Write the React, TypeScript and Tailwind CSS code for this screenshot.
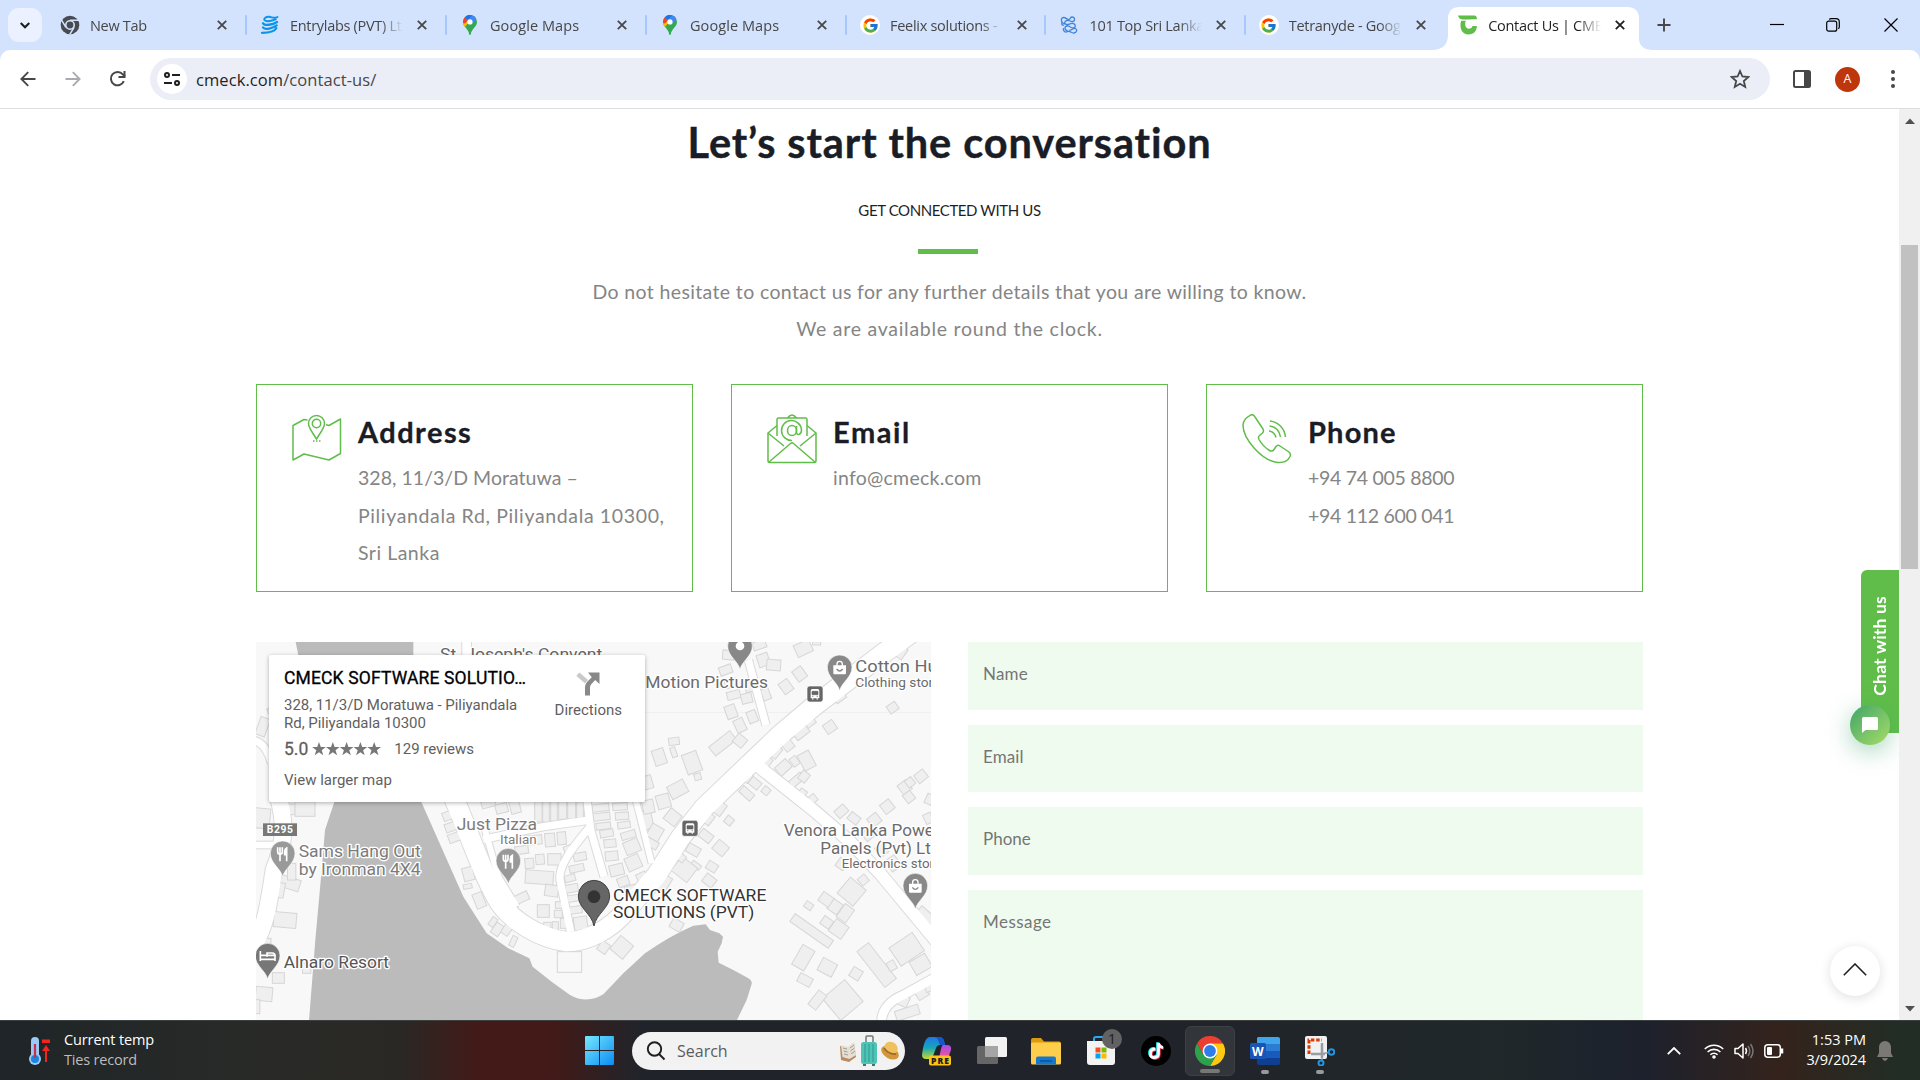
import React from "react";
import { FcGoogle } from "react-icons/fc";

type IconProps = { className?: string };

/* ---------- browser icons ---------- */

const X = ({ className = "" }: IconProps) => (
  <svg viewBox="0 0 10 10" className={className} fill="none" stroke="currentColor" strokeWidth="1.8">
    <path d="M.8.8l8.4 8.4M9.2.8L.8 9.2" />
  </svg>
);

const ChromeMono = () => (
  <svg viewBox="0 0 20 20" className="size-5">
    <circle cx="10" cy="10" r="9.3" fill="#474b50" />
    <circle cx="10" cy="10" r="4.2" fill="#474b50" stroke="#d3e3fd" strokeWidth="1.6" />
    <path d="M10 5.2h8.6M5.9 12.4L1.6 5.2M14.1 12.4L9.8 19.4" stroke="#d3e3fd" strokeWidth="1.5" />
  </svg>
);

const Entrylabs = () => (
  <svg viewBox="0 0 20 20" className="size-5" fill="none" stroke="#0b95ea" strokeWidth="2.3" strokeLinecap="round">
    <path d="M17.500 2C14 4 12 2 9 1.800 6 1.600 3.500 3.500 4.500 5.200 6 7 13 6 15.800 4.200" strokeWidth="2" />
    <path d="M3 8.200c1.500 3 10 1.500 14-1.200M3 12.400c2 2.800 10 1 13.700-2M2 17.800c5 0 12-.5 14.300-4.500" />
  </svg>
);

const MapsPin = () => (
  <svg viewBox="0 0 14 20" className="h-5 w-3.5">
    <path d="M7 0a7 7 0 0 1 7 7c0 5-5.500 6.500-6.200 12.300-.1.900-1.500.9-1.600 0C5.500 13.500 0 12 0 7a7 7 0 0 1 7-7z" fill="#34a853" />
    <path d="M0 7c0 2 .8 3.600 1.900 5l5.900-7L1.700 2.400A7 7 0 0 0 0 7z" fill="#fbbc04" />
    <path d="M1.700 2.400L5 5.200 2 8.600.1 8A7 7 0 0 1 1.700 2.400z" fill="#ea4335" />
    <path d="M1.700 2.400A7 7 0 0 1 9.100.3L5 5.200z" fill="#1a73e8" />
    <path d="M9.100.3a7 7 0 0 1 4.200 3.600L9 9 5 5.200z" fill="#4285f4" />
    <circle cx="7" cy="6.900" r="2.600" fill="#fff" />
  </svg>
);

const GoogleFav = () => (
  <span className="flex size-5 items-center justify-center rounded-full bg-white">
    <FcGoogle className="size-[17px]" />
  </span>
);

const Knot = () => (
  <svg viewBox="0 0 18 18" className="size-[18px]" fill="none" stroke="#3f83dc" strokeWidth="1.300">
    <path d="M5 8C1 7 0 2 3.500 1.500 6 1.300 7 4 9 3.500c2-.6 1-2.500 3-2.500 3 0 3.500 4 .5 4.500-2 .3-3-1.500-5.500-1C4 5 4 8 6.500 8.500c2 .3 4-1.500 6.500-1 3 .6 3 4 .5 4.500-2.500.3-4-2.500-6.500-2-3 .6-2.500 4.500.5 4.500" />
    <path d="M2 6.500c-1 2 .5 3 2 2.500M3.500 12c-1 3 2 5 4 3.500 2-1.300 4 2 6.500 1.500 3-.6 3.500-3.500 1.500-4.500-2-.8-4 2-6 1.500" />
  </svg>
);

const CmeckFav = () => (
  <svg viewBox="0 0 19 19" className="size-5">
    <path d="M0 .500h15.500q2.500 0 2.500 3.500h-4.500c-1 0-.8.300-5.500.300C4 4.300 1 4.500 0 .500z" fill="#61bd4a" />
    <path d="M3 5.500h4.500c-1.300 2.500-1 7.500 3 7.500 2.500 0 3-1.500 3.200-2.500H18c-.3 5-3 8-8 8-6.500 0-9-6.500-7-13z" fill="#61bd4a" />
  </svg>
);

const tabs: { title: string; icon: React.ReactNode; spacing: string; width: string }[] = [
  { title: "New Tab", icon: <ChromeMono />, spacing: "tracking-[-0.300px]", width: "w-[200px]" },
  { title: "Entrylabs (PVT) Lt", icon: <Entrylabs />, spacing: "tracking-[-0.300px]", width: "w-[200px]" },
  { title: "Google Maps", icon: <MapsPin />, spacing: "tracking-[0.080px]", width: "w-[200px]" },
  { title: "Google Maps", icon: <MapsPin />, spacing: "tracking-[0.080px]", width: "w-[200px]" },
  { title: "Feelix solutions -", icon: <GoogleFav />, spacing: "tracking-[-0.280px]", width: "w-[199.400px]" },
  { title: "101 Top Sri Lanka", icon: <Knot />, spacing: "tracking-[-0.280px]", width: "w-[199.400px]" },
  { title: "Tetranyde - Goog", icon: <GoogleFav />, spacing: "tracking-[-0.300px]", width: "w-[199.400px]" },
  { title: "Contact Us | CME", icon: <CmeckFav />, spacing: "tracking-[-0.300px]", width: "w-[199.400px]" },
];

function Tab({ title, icon, spacing, width, active, divider }: (typeof tabs)[number] & { active: boolean; divider: boolean }) {
  return (
    <div className={`relative flex h-[50px] shrink-0 items-center pl-3 ${width} ${active ? "text-[#1f1f1f]" : "text-[#474747]"}`}>
      {active && (
        <svg viewBox="0 0 220 43" className="absolute bottom-0 -left-3 h-[43px] w-[220px]" fill="#fff">
          <path d="M0 43q15-1 15-15V12Q15 0 27 0h167q12 0 12 12v19q0 12 14 12z" />
        </svg>
      )}
      <div className="relative flex h-full w-full items-center">
        <span className="flex w-[22px] justify-center">{icon}</span>
        <span className={`mt-px ml-[9px] w-[113px] overflow-hidden text-[14.500px] whitespace-nowrap [mask-image:linear-gradient(to_right,#000_80%,transparent_100%)] ${spacing}`}>
          {title}
        </span>
        <X className="ml-3.5 size-2.5" />
      </div>
      {divider && <span className="absolute right-0 h-5 w-0.5 rounded bg-[#a8c7fa]" />}
    </div>
  );
}

function TabStrip() {
  return (
    <header className="flex h-[50px] items-center bg-[#d3e3fd]">
      <button className="mr-[5px] ml-2 flex h-[34px] w-[34px] shrink-0 items-center justify-center rounded-[11px] bg-[#ebf1fe]">
        <svg viewBox="0 0 10 7" className="h-[7px] w-2.5" fill="none" stroke="#1f1f1f" strokeWidth="2.100">
          <path d="M.7 1L5 5.300 9.300 1" />
        </svg>
      </button>
      {tabs.map((t, i) => (
        <Tab key={i} {...t} active={i === 7} divider={i < 6} />
      ))}
      <svg viewBox="0 0 14 14" className="ml-3 size-3.5 shrink-0" stroke="#474747" strokeWidth="1.900">
        <path d="M7 .5v13M.5 7h13" />
      </svg>
      <div className="ml-auto flex items-center pr-[22px] text-black">
        <svg viewBox="0 0 14 14" className="size-3.5" stroke="currentColor" strokeWidth="1.200"><path d="M0 6.500h14" /></svg>
        <svg viewBox="0 0 14 14" className="ml-[42px] size-3.5" fill="none" stroke="currentColor" strokeWidth="1.200">
          <rect x=".7" y="3.200" width="10" height="10" rx="2" />
          <path d="M3.300 1.500Q4 .7 5.300.7H10q3.300 0 3.300 3.300v5q0 1-1 1.800" />
        </svg>
        <svg viewBox="0 0 14 14" className="ml-11 size-3.5" stroke="currentColor" strokeWidth="1.200"><path d="M.5.5l13 13M13.500.5l-13 13" /></svg>
      </div>
    </header>
  );
}

function Toolbar() {
  return (
    <div className="bg-[#d3e3fd]">
      <div className="flex h-[59px] items-center rounded-t-[10px] border-b border-[#dcdee2] bg-white pl-5 text-[#474747]">
        <svg viewBox="0 0 16 16" className="size-4" fill="none" stroke="currentColor" strokeWidth="1.900"><path d="M15.500 8H1.800M8.200 1.200L1.400 8l6.800 6.800" /></svg>
        <svg viewBox="0 0 16 16" className="ml-[29px] size-4" fill="none" stroke="#a9abae" strokeWidth="1.900"><path d="M.5 8h13.700M7.800 1.200L14.600 8l-6.800 6.800" /></svg>
        <svg viewBox="0 0 18 18" className="ml-7 size-[18px]" fill="none" stroke="currentColor" strokeWidth="2">
          <path d="M14.800 11.200A6.700 6.700 0 1 1 13.800 4.400L16 6.500" />
          <path d="M15.500 1v6h-6" />
        </svg>
        <div className="ml-[23px] flex h-[42px] w-[1620px] items-center rounded-full bg-[#ebeef7] pr-5 pl-[7px]">
          <span className="flex size-[30px] items-center justify-center rounded-full bg-white">
            <svg viewBox="0 0 16 14" className="h-3.5 w-4" fill="none" stroke="#1f1f1f" strokeWidth="2">
              <circle cx="3" cy="3" r="2" /><path d="M8 3h8M0 11h8" /><circle cx="13" cy="11" r="2" />
            </svg>
          </span>
          <span className="mt-0.5 ml-[9px] text-[16.500px] tracking-[0.080px] text-[#1f1f1f]">
            cmeck.com<span className="text-[#474747]">/contact-us/</span>
          </span>
          <svg viewBox="0 0 20 20" className="ml-auto size-5" fill="none" stroke="currentColor" strokeWidth="1.800">
            <path d="M10 2l2.400 5.500 6 .5-4.600 4 1.400 5.900-5.200-3.200-5.200 3.200L6.200 12 1.600 8l6-.5z" />
          </svg>
        </div>
        <svg viewBox="0 0 18 18" className="ml-[23px] size-[18px]"><rect x="1" y="1" width="16" height="16" rx="1.500" fill="none" stroke="#474747" strokeWidth="2" /><path d="M11 1h6v16h-6z" fill="#474747" /></svg>
        <span className="ml-6 flex size-[25px] items-center justify-center rounded-full bg-[#bf360c] text-[12.500px] text-white">A</span>
        <svg viewBox="0 0 4 18" className="ml-[31px] h-[18px] w-1" fill="currentColor"><circle cx="2" cy="2" r="2" /><circle cx="2" cy="9" r="2" /><circle cx="2" cy="16" r="2" /></svg>
      </div>
    </div>
  );
}

/* ---------- contact cards ---------- */

const MapIcon = () => (
  <svg viewBox="0 0 50 50" className="size-[50px]" fill="none" stroke="#61bd4a" strokeWidth="1.500">
    <path d="M15.500 6L12 5.500 1 11.500v34.500l11-6 25 6 11.500-6.500V5L37 11.500l-3-.8" strokeLinejoin="round" />
    <path d="M24.500 25C20 17.500 16.500 14 16.500 9.500a8 8 0 0 1 16 0c0 4.500-3.500 8-8 15.500z" />
    <circle cx="24.500" cy="9.500" r="4.200" />
    <path d="M21 27h7.500" strokeDasharray="1.500 1.500" />
  </svg>
);

const MailIcon = () => (
  <svg viewBox="0 0 50 50" className="size-[50px]" fill="none" stroke="#61bd4a" strokeWidth="1.500" strokeLinejoin="round">
    <path d="M10 11.500L1 19v28q0 1.500 1.500 1.500h45q1.500 0 1.500-1.500V19l-9-7.500" />
    <path d="M10 22V5.500Q10 4 11.500 4h27Q40 4 40 5.500V22M20.500 4q4.500-6 9 0" />
    <path d="M1 19l16 13M49 19L33 32M2 48l21.500-18.500q1.500-1.500 3 0L48 48" />
    <path d="M25 26.500a10 10 0 1 1 9.500-10.500c0 5-5 6-5 2v-6" />
    <ellipse cx="25" cy="16.500" rx="4.500" ry="5" />
  </svg>
);

const PhoneIcon = () => (
  <svg viewBox="0 0 50 50" className="size-[50px]" fill="none" stroke="#61bd4a" strokeWidth="1.500" strokeLinejoin="round">
    <path d="M9 .8C4 3.500 1 7 1 11c0 14 19 36 35 37.500 6 .5 10-2 12-6 .8-1.800.5-3.300-1-4.500l-9-6c-1.500-1-3-.8-4 .5l-2 3c-1 1.500-2.500 2-4.500 1-4-2.500-8-6.500-10.500-11-1-2-.5-3.500 1-4.500l2.500-2c1-1 1.500-2 .5-4L13 3Q11.500 0 9 .8z" />
    <path d="M28 7c8 1 14.500 7 15.500 16M27.500 12c6 .8 10 5 11 11M27 17c4 .5 6 2.500 7 6.500" />
  </svg>
);

type Line = { text: string; spacing: string };
const cards: { title: string; icon: React.ReactNode; head: string; lines: Line[] }[] = [
  {
    title: "Address",
    icon: <MapIcon />,
    head: "tracking-[1.450px]",
    lines: [
      { text: "328, 11/3/D Moratuwa –", spacing: "tracking-[0.030px]" },
      { text: "Piliyandala Rd, Piliyandala 10300,", spacing: "tracking-[0.640px]" },
      { text: "Sri Lanka", spacing: "tracking-[0.500px]" },
    ],
  },
  { title: "Email", icon: <MailIcon />, head: "tracking-[1.550px]", lines: [{ text: "info@cmeck.com", spacing: "tracking-[0.250px]" }] },
  {
    title: "Phone",
    icon: <PhoneIcon />,
    head: "tracking-[1.200px]",
    lines: [
      { text: "+94 74 005 8800", spacing: "tracking-[-0.300px]" },
      { text: "+94 112 600 041", spacing: "tracking-[-0.300px]" },
    ],
  },
];

/* ---------- map drawing ---------- */

// [centre x, centre y, width, height, rotation]
type B = [number, number, number, number, number];
const buildings: B[] = [
  [38, 290, 30, 55, 20], [70, 245, 30, 30, -25], [35, 565, 50, 60, 5], [125, 538, 22, 32, 0], [165, 537, 60, 44, 0],
  [120, 760, 60, 35, 18], [88, 780, 30, 45, 10], [105, 870, 68, 45, 5], [45, 945, 36, 40, 0], [85, 1044, 36, 32, 0],
  [42, 1092, 50, 42, 5], [125, 725, 25, 50, 0], [170, 1015, 25, 30, 0], [22, 1130, 15, 42, 0],
  [600, 555, 44, 26, -20], [605, 590, 40, 26, -20], [615, 622, 40, 26, -20], [655, 732, 32, 40, -15], [653, 769, 26, 14, -10],
  [688, 811, 30, 46, -22], [729, 876, 18, 28, 35], [742, 898, 26, 36, 35], [770, 900, 24, 30, 35], [790, 934, 16, 32, 25],
  [715, 520, 42, 24, -15], [755, 535, 36, 28, -15], [795, 530, 30, 40, -15], [865, 545, 22, 62, 0], [888, 545, 20, 62, 0],
  [912, 543, 20, 60, 0], [938, 540, 24, 56, 0], [965, 540, 24, 54, 0], [990, 540, 20, 50, 0],
  [838, 700, 26, 30, -5], [870, 688, 26, 30, -5], [913, 688, 40, 34, 0], [868, 742, 84, 40, 4], [815, 803, 42, 26, -25],
  [790, 833, 22, 20, 30], [880, 843, 36, 38, 0], [905, 782, 40, 34, 8], [892, 888, 22, 22, 0], [916, 888, 18, 26, 0],
  [940, 880, 18, 30, 0], [925, 852, 24, 22, 0], [928, 825, 24, 20, 0], [960, 745, 32, 20, -15], [965, 775, 38, 24, -10],
  [970, 805, 36, 20, -8], [980, 715, 44, 22, -12], [990, 680, 38, 24, -10], [975, 840, 42, 22, -8], [992, 880, 40, 40, -8],
  [850, 630, 52, 28, -5], [900, 630, 30, 40, -5], [935, 625, 26, 38, -5], [815, 660, 40, 24, -8], [955, 660, 24, 26, -20],
  [1052, 533, 50, 22, -6], [1055, 560, 50, 22, -6], [1060, 588, 44, 20, -6], [1070, 610, 40, 22, -10], [1080, 640, 36, 24, -6],
  [1085, 678, 38, 28, -6], [1100, 720, 42, 34, -14], [1120, 755, 34, 28, -20], [1110, 530, 44, 22, -4], [1116, 558, 40, 22, -4],
  [1122, 585, 38, 20, -8], [1135, 615, 44, 22, -16], [1146, 650, 46, 40, -22], [1150, 698, 44, 42, -24], [1142, 780, 32, 26, -20],
  [1190, 570, 34, 56, -12], [1195, 530, 34, 40, -12], [1175, 740, 30, 24, -25],
  [1215, 608, 40, 44, 30], [1205, 640, 40, 24, 30], [1240, 514, 40, 42, -16], [1268, 562, 42, 40, 38], [1190, 458, 34, 40, -16],
  [1061, 952, 30, 32, 35], [1115, 952, 50, 52, 40], [1235, 755, 48, 48, 32], [1280, 885, 36, 30, 30],
  [1228, 381, 36, 48, -18], [1272, 334, 32, 22, -8], [1271, 367, 16, 30, -20], [1326, 398, 46, 62, -20], [1343, 440, 20, 20, -15],
  [1418, 340, 80, 34, -38], [1283, 478, 54, 42, -28], [1470, 332, 34, 32, 40], [1435, 75, 34, 28, 5], [1427, 120, 38, 26, -20],
  [1443, 160, 36, 24, -16], [1451, 195, 40, 24, -14], [1443, 245, 32, 40, -20], [1470, 286, 30, 40, -25], [1507, 260, 28, 36, -22],
  [1540, 90, 34, 38, -18], [1571, 105, 42, 32, 5], [1528, 45, 40, 25, -20], [1548, 193, 24, 34, -20], [1608, 170, 32, 38, -36],
  [1649, 132, 32, 38, -36], [1660, 55, 50, 38, -25], [1700, 40, 24, 10, 0], [1490, 205, 32, 30, -14], [1500, 170, 30, 30, -14],
  [1645, 296, 46, 56, -38], [1675, 270, 30, 40, -38], [1695, 240, 30, 28, 28], [1740, 291, 32, 34, 55], [1580, 318, 28, 22, 38],
  [1611, 342, 30, 40, -38], [1543, 393, 40, 36, 38], [1577, 366, 26, 36, 38], [1600, 412, 32, 44, 48], [1634, 394, 22, 28, -38],
  [1670, 392, 38, 52, -28], [1640, 450, 46, 24, -40], [1662, 440, 26, 30, 38], [1658, 488, 22, 20, 35], [1684, 510, 34, 24, -38],
  [1928, 233, 30, 26, -35], [1768, 200, 28, 34, 55], [1790, 165, 26, 30, -38], [1870, 85, 42, 20, -38], [1950, 65, 34, 36, 35], [1920, 45, 32, 26, 35],
  [1490, 440, 28, 30, 38], [1515, 460, 26, 34, -50], [1490, 490, 24, 44, -48], [1548, 482, 22, 22, 40], [1460, 466, 20, 22, 40],
  [1405, 533, 38, 40, 36], [1376, 567, 24, 34, 38], [1437, 572, 24, 24, 38], [1368, 618, 40, 28, 38], [1412, 654, 40, 36, 40],
  [1330, 660, 40, 28, 30], [1386, 710, 32, 26, 32], [1338, 706, 30, 16, 35], [1303, 718, 60, 54, 38], [1378, 752, 36, 30, 38], [1290, 680, 34, 22, 40],
  [1774, 544, 36, 28, -42], [1812, 565, 34, 26, 38], [1873, 570, 34, 32, -38], [1912, 530, 34, 34, -38], [1964, 472, 32, 34, -38],
  [1980, 457, 24, 26, -38], [2013, 439, 34, 30, -38], [1977, 501, 28, 30, -38], [2038, 508, 22, 30, 25], [2035, 565, 24, 30, -25],
  [1805, 785, 62, 62, -50], [1840, 750, 26, 26, -40], [1755, 830, 36, 36, 35], [1728, 808, 38, 32, 35], [1786, 850, 34, 48, 35],
  [1676, 827, 24, 20, 35], [1730, 877, 32, 28, 35], [1766, 897, 46, 44, 35], [1685, 903, 140, 28, 35], [1660, 983, 42, 68, 30],
  [1732, 1012, 48, 42, 28], [1665, 1050, 42, 28, 28], [1818, 1031, 32, 32, 32], [1880, 1005, 44, 136, -38], [1970, 958, 84, 66, -34],
  [2012, 1003, 54, 46, -30], [1925, 1007, 24, 28, -30], [2025, 862, 60, 40, 42], [1778, 1110, 88, 86, -40], [1702, 1110, 30, 54, 38],
  [1959, 1112, 34, 32, 25], [2015, 1088, 36, 34, -32], [1972, 1148, 72, 30, -18], [2040, 1068, 32, 30, -20], [1930, 700, 34, 40, -35], [1895, 660, 28, 34, -38], [1775, 702, 28, 30, 35], [1860, 610, 44, 30, -38],
];

const mainRoad = "M2010 -10L1900 70 1690 230 1590 315 1480 420 1360 535 1290 625 1220 735 1130 840C1080 900 1010 935 950 935C870 925 790 875 750 820C700 740 670 640 610 500L560 400";
const sideRoads: [string, number][] = [
  ["M1495 385L1690 540 1800 635 1890 730 2060 935", 36],
  ["M1495 90L1548 285", 22],
  ["M1155 500L1205 700", 18],
  ["M1010 500L1022 600 1062 740", 22],
  ["M1025 585C960 660 925 710 930 750L962 905", 22],
  ["M700 628L880 590 1020 570", 22],
  ["M705 600L745 740 800 830", 18],
  ["M85 500C110 590 100 650 72 720 55 830 50 880 5 960", 50],
  ["M0 645L80 645", 20],
  ["M2060 1040L1960 1095Q1890 1125 1895 1185", 26],
  ["M0 330Q45 330 65 400", 22],
  ["M650 20V100", 26],
];

const Pin = ({ x, y, fill, children }: { x: number; y: number; fill: string; children?: React.ReactNode }) => (
  <g transform={`translate(${x} ${y})`}>
    <path d="M0 70C-6 45-37 30-37 0a37 37 0 0 1 74 0C37 30 6 45 0 70z" fill={fill} stroke="#fff" strokeOpacity=".6" strokeWidth="3" />
    {children}
  </g>
);

const Fork = () => (
  <g fill="none" stroke="#fff" strokeWidth="5">
    <path d="M-15-18v14q0 6 7 6t7-6v-14M-8-18v42" />
    <path d="M12 24V-16q-6 3-6 12v8h6" fill="#fff" />
  </g>
);
const Bag = () => (
  <g>
    <path d="M-19-6h38v24q0 3-3 3h-32q-3 0-3-3z" fill="#fff" />
    <path d="M-8-4v-6a8 8 0 0 1 16 0v6" fill="none" stroke="#fff" strokeWidth="4" />
    <path d="M-9 5q9 12 18 0" fill="none" stroke="#888" strokeWidth="4" />
  </g>
);
const Bus = ({ x, y }: { x: number; y: number }) => (
  <g transform={`translate(${x} ${y})`}>
    <rect x="-24" y="-24" width="48" height="48" rx="8" fill="#666" stroke="#fff" strokeWidth="2" />
    <path d="M-13-10q0-5 5-5H8q5 0 5 5v23h-5v4H5v-4H-5v4h-3v-4h-5z" fill="#fff" />
    <path d="M-9-8H9V2H-9zM-9 7h4M5 7h4" fill="#666" stroke="#666" strokeWidth="2" />
  </g>
);

const labels: { x: number; y: number; w: number; s: number; c: string; t: string }[] = [
  { x: 570, y: 91, w: 487, s: 51, c: "#666", t: "St. Joseph's Convent" },
  { x: 1186, y: 175, w: 368, s: 51, c: "#6b6b6b", t: "Motion Pictures" },
  { x: 1816, y: 127, w: 320, s: 51, c: "#6b6b6b", t: "Cotton Hut.lk" },
  { x: 1816, y: 171, w: 255, s: 41, c: "#6b6b6b", t: "Clothing store" },
  { x: 620, y: 599, w: 241, s: 51, c: "#7b7b7b", t: "Just Pizza" },
  { x: 750, y: 641, w: 110, s: 41, c: "#7b7b7b", t: "Italian" },
  { x: 146, y: 681, w: 366, s: 51, c: "#7b7b7b", t: "Sams Hang Out" },
  { x: 146, y: 734, w: 366, s: 51, c: "#7b7b7b", t: "by Ironman 4X4" },
  { x: 101, y: 1014, w: 316, s: 51, c: "#555", t: "Alnaro Resort" },
  { x: 1089, y: 812, w: 460, s: 52, c: "#333", t: "CMECK SOFTWARE" },
  { x: 1089, y: 864, w: 424, s: 52, c: "#333", t: "SOLUTIONS (PVT)" },
  { x: 1601, y: 619, w: 468, s: 51, c: "#6b6b6b", t: "Venora Lanka Power" },
  { x: 1711, y: 671, w: 360, s: 51, c: "#6b6b6b", t: "Panels (Pvt) Ltd" },
  { x: 1775, y: 714, w: 298, s: 41, c: "#6b6b6b", t: "Electronics store" },
];

function MapCanvas() {
  return (
    <svg viewBox="18 36 2025 1134" className="block h-[378px] w-[675px] font-[Roboto]">
      <rect x="0" y="0" width="2100" height="1200" fill="#f8f8f8" />
      <path d="M1160 247H2050" stroke="#efefef" strokeWidth="3" />
      <path
        fill="#bbb"
        d="M137 36H490V300L514 516 640 800 710 910 775 955 838 985 848 1010 905 1055 960 1095Q1010 1123 1060 1093L1120 1030 1185 970Q1260 917 1330 887L1367 883 1380 900 1408 910 1419 920 1415 940 1403 965 1406 998 1450 1020 1495 1045Q1507 1052 1505 1062L1490 1110 1460 1172H177L196 930 215 720 225 600 253 516 170 200z"
      />
      <g fill="none" stroke="#dadada">
        <path d={mainRoad} strokeWidth="64" />
        {sideRoads.map(([d, w], i) => <path key={i} d={d} strokeWidth={w + 6} />)}
      </g>
      <g fill="#efefef" stroke="#d6d6d6" strokeWidth="3">
        {buildings.map(([cx, cy, w, h, r], i) => (
          <rect key={i} x={cx - w / 2} y={cy - h / 2} width={w} height={h} transform={`rotate(${r} ${cx} ${cy})`} />
        ))}
        <rect x="922" y="965" width="73" height="62" fill="#f8f8f8" />
      </g>
      <g fill="none" stroke="#fff">
        <path d={mainRoad} strokeWidth="58" />
        {sideRoads.map(([d, w], i) => <path key={i} d={d} strokeWidth={w} />)}
      </g>
      <rect x="39" y="580" width="102" height="38" fill="#777" />
      <text x="50" y="610" fontSize="31" fontWeight="700" fill="#fff" textLength="79">B295</text>
      <Pin x={98} y={670} fill="#999"><Fork /></Pin>
      <Pin x={775} y={692} fill="#999"><Fork /></Pin>
      <Pin x={53} y={977} fill="#777">
        <path d="M-22-14v30M-22 11h44v-12h-44M22 16v-16q0-8-8-8H-2V3M-12-4h.1" stroke="#fff" strokeWidth="5" fill="none" />
      </Pin>
      <Pin x={1470} y={48} fill="#888"><circle r="13" fill="#fff" /></Pin>
      <Pin x={1769} y={112} fill="#888"><Bag /></Pin>
      <Pin x={1996} y={767} fill="#888"><Bag /></Pin>
      <Bus x={1695} y={192} />
      <Bus x={1320} y={595} />
      <path d="M1032 888C1025 850 985 835 985 798a47 47 0 0 1 94 0C1079 835 1039 850 1032 888z" fill="#666" stroke="#444" strokeWidth="3" />
      <circle cx="1032" cy="800" r="19" fill="#333" />
      <g stroke="#fff" strokeWidth="8" strokeLinejoin="round" paintOrder="stroke">
        {labels.map((l) => (
          <text key={l.t} x={l.x} y={l.y} fontSize={l.s} fill={l.c} textLength={l.w} lengthAdjust="spacingAndGlyphs">{l.t}</text>
        ))}
      </g>
    </svg>
  );
}

function MapEmbed() {
  return (
    <div className="relative h-[378px] w-[675px] overflow-hidden">
      <MapCanvas />
      <div className="absolute top-[13px] left-[13px] flex h-[147px] w-[376px] justify-between rounded-[2px] bg-white pt-3 pr-[23px] pl-[15px] font-[Roboto] text-[#5f5f5f] shadow-[0_1px_4px_rgba(0,0,0,0.3)]">
        <div>
          <div className="text-[17.500px] leading-[23px] tracking-[0.150px] text-black [-webkit-text-stroke:0.3px]">CMECK SOFTWARE SOLUTIO…</div>
          <div className="mt-1.5 text-[15px] leading-[18px] tracking-[-0.030px]">328, 11/3/D Moratuwa - Piliyandala<br />Rd, Piliyandala 10300</div>
          <div className="mt-2 flex h-[18px] items-center text-[15px]">
            <span className="text-[17.500px] [-webkit-text-stroke:0.3px]">5.0</span>
            <svg viewBox="0 0 70 14" className="ml-1 h-3.5 w-[70px]" fill="#777">
              {[0, 1, 2, 3, 4].map((n) => (
                <path key={n} transform={`translate(${n * 13.8} 0)`} d="M7 0l1.800 5h5L9.700 8.200 11.300 13.300 7 10.200 2.700 13.300 4.300 8.200.2 5h5z" />
              ))}
            </svg>
            <span className="mt-px ml-3">129 reviews</span>
          </div>
          <div className="mt-[13px] text-[15px] leading-[18px]">View larger map</div>
        </div>
        <div className="flex flex-col items-center pt-[5px] text-[15px]">
          <svg viewBox="0 0 24 24" className="size-6">
            <path d="M3.500.5L.3 3.700 9 11.500l3-3.500z" fill="#c9c9c9" />
            <path d="M9 23.500V15q0-3 2.500-5.500l4.300-4.200L12 .5h11.500V12l-4.300-4-4 4.300q-1.200 1.200-1.200 3.200v8z" fill="#888" />
          </svg>
          <span className="mt-[3px]">Directions</span>
        </div>
      </div>
    </div>
  );
}

/* ---------- page ---------- */

const Field = ({ label, height, spacing = "" }: { label: string; height: string; spacing?: string }) => (
  <div className={`bg-[#f0fbef] px-[15px] pt-[19px] font-[Lato] text-[17px] leading-[26px] text-[#757575] ${height} ${spacing}`}>{label}</div>
);

function Page() {
  return (
    <main className="relative h-[911px] flex-1 overflow-hidden bg-white font-[Lato]">
      <div className="mx-auto w-[1387px]">
        <section className="flex h-[275px] flex-col items-center text-center">
          <h1 className="mt-[9px] text-[41.500px] leading-[48px] font-bold tracking-[0.900px] text-[#1a1c26] [-webkit-text-stroke:0.4px]">Let’s start the conversation</h1>
          <p className="mt-[34px] text-[15px] leading-5 tracking-[-0.400px] text-[#1f1f1f]">GET CONNECTED WITH US</p>
          <span className="mt-[29px] ml-[-3px] h-[5px] w-[60px] bg-[#61bd4a]" />
          <p className="mt-[19px] text-[19.500px] leading-[37px] tracking-[0.360px] text-[#858585]">
            Do not hesitate to contact us for any further details that you are willing to know.
            <br />
            <span className="tracking-[0.740px]">We are available round the clock.</span>
          </p>
        </section>
        <section className="grid grid-cols-3 gap-[38px]">
          {cards.map((c) => (
            <article key={c.title} className="flex h-[208px] border border-[#61bd4a] pt-7 pl-[35px]">
              <div className="w-[66px] shrink-0 pt-px">{c.icon}</div>
              <div>
                <h2 className={`text-[29px] leading-[38px] font-bold text-[#1a1c26] [-webkit-text-stroke:0.3px] ${c.head}`}>{c.title}</h2>
                <div className="mt-2 text-[19.500px] leading-[37.500px] whitespace-nowrap text-[#858585]">
                  {c.lines.map((l) => <div key={l.text} className={l.spacing}>{l.text}</div>)}
                </div>
              </div>
            </article>
          ))}
        </section>
        <section className="mt-[50px] grid grid-cols-[675px_675px] gap-[37px]">
          <MapEmbed />
          <form className="flex flex-col gap-[15px]">
            <Field label="Name" height="h-[67.500px]" spacing="tracking-[0.200px]" />
            <Field label="Email" height="h-[67.500px]" spacing="tracking-[0.100px]" />
            <Field label="Phone" height="h-[67.500px]" />
            <Field label="Message" height="h-[135px]" spacing="tracking-[0.450px]" />
          </form>
        </section>
      </div>

      <div className="absolute top-[461px] right-0 flex h-[163px] w-[38px] items-center justify-center rounded-tl-md bg-[#61bd4a] pb-3">
        <span className="rotate-180 text-[17.500px] font-bold tracking-[0.200px] text-white [writing-mode:vertical-rl]">Chat with us</span>
      </div>
      <div className="absolute top-[596px] right-[9px] flex size-10 items-center justify-center rounded-full bg-gradient-to-br from-[#3aa568] to-[#a5dc66] shadow-[0_6px_24px_rgba(58,165,104,0.45)]">
        <svg viewBox="0 0 16 16" className="size-4" fill="#fff"><path d="M1.500 0h13Q16 0 16 1.500v10q0 1.500-1.500 1.500H3.500L0 16V1.500Q0 0 1.500 0z" /></svg>
      </div>
      <div className="absolute top-[837px] right-[19px] flex size-[50px] items-center justify-center rounded-full bg-white shadow-[0_2px_12px_rgba(0,0,0,0.13)]">
        <svg viewBox="0 0 24 13" className="mb-1 h-[13px] w-6" fill="none" stroke="#222" strokeWidth="1.600"><path d="M.8 12.300L12 1l11.200 11.300" /></svg>
      </div>
    </main>
  );
}

const Scrollbar = () => (
  <div className="flex h-[911px] w-[21px] flex-col items-center bg-[#f0f0f0]">
    <svg viewBox="0 0 10 6" className="mt-[9px] h-[6px] w-2.5" fill="#505050"><path d="M0 6l5-5.500L10 6z" /></svg>
    <div className="mt-[121px] h-[324px] w-[17px] bg-[#c1c1c1]" />
    <svg viewBox="0 0 10 6" className="mt-auto mb-2 h-[6px] w-2.5" fill="#505050"><path d="M0 0l5 5.500L10 0z" /></svg>
  </div>
);

/* ---------- taskbar ---------- */

const Thermometer = () => (
  <svg viewBox="0 0 24 30" className="h-[30px] w-6">
    <rect x="3" y="1" width="8" height="22" rx="4" fill="#9cc9f5" />
    <circle cx="7" cy="23" r="6" fill="#9cc9f5" /><circle cx="7" cy="23" r="4" fill="#1b86e0" />
    <path d="M7 8v14" stroke="#c4314b" strokeWidth="2.200" />
    <path d="M14 3.500h8v3.500h-8zM18 9l4 6h-3v11h-2V15h-3z" fill="#f3261f" />
  </svg>
);

const Windows = () => (
  <svg viewBox="0 0 29 29" className="size-[29px]">
    <defs><linearGradient id="win" x2="1" y2="1"><stop stopColor="#77e8fd" /><stop offset="1" stopColor="#0a8cf3" /></linearGradient></defs>
    <path d="M1 0h13v14H0V1q0-1 1-1zM15 0h13q1 0 1 1v13H15zM0 15h14v14H1q-1 0-1-1zM15 15h14v13q0 1-1 1H15z" fill="url(#win)" />
  </svg>
);

const SearchArt = () => (
  <svg viewBox="0 0 62 32" className="h-8 w-[62px]">
    <path d="M1 11l8 2 6-5 2 14-7 5-8-2z" fill="#b98b62" /><path d="M2 10l7 2 1.500 12-7-2zM9 12l6-5 2 13-6.500 4z" fill="#e6dfd4" />
    <path d="M4 13l4 1M4.500 16l4 1M5 19l4 1M11 13l4-3M11.500 16l4-3M12 19l4-3" stroke="#8f8a83" strokeWidth=".8" />
    <path d="M27 8V2q0-1 1-1h5q1 0 1 1v6" fill="none" stroke="#777" strokeWidth="1.500" />
    <rect x="22" y="7" width="16" height="22" rx="2.500" fill="#4fc3b5" /><path d="M26 9v18M30 9v18M34 9v18" stroke="#2f998f" /><path d="M24 29h3v2h-3zM33 29h3v2h-3z" fill="#37796f" />
    <ellipse cx="51" cy="17.500" rx="9.500" ry="6" transform="rotate(30 51 17.500)" fill="#d2973a" />
    <ellipse cx="52" cy="13" rx="7" ry="6" transform="rotate(30 52 13)" fill="#eec15e" /><path d="M45 13q4 6.500 12 6" stroke="#a0692a" strokeWidth="1.800" fill="none" />
  </svg>
);

const Copilot = () => (
  <svg viewBox="0 0 30 30" className="size-[30px]">
    <defs>
      <linearGradient id="cpA" x2="0" y2="1"><stop stopColor="#1e78e8" /><stop offset=".5" stopColor="#17a7b8" /><stop offset="1" stopColor="#c9d92d" /></linearGradient>
      <linearGradient id="cpB" x2="0" y2="1"><stop stopColor="#a14bf0" /><stop offset=".6" stopColor="#e5569b" /><stop offset="1" stopColor="#f59a4a" /></linearGradient>
    </defs>
    <path d="M8 1h9q4 0 5 4l1 4h-5q-3 0-4 3l-3 8q-1 3-4 3H4q-4 0-4-4Q2 1 8 1z" fill="url(#cpA)" />
    <path d="M12 1h5q4 0 5 4l1 4h-5l-2-5q-1-3-4-3z" fill="#1955c9" />
    <path d="M21 9h4q5 0 4 5l-3 8q-1 4-5 4h-8q3-1 4-4l2-9q1-4 2-4z" fill="url(#cpB)" />
    <rect x="7" y="19.500" width="22" height="10" rx="2" fill="#fcc419" />
    <text x="9" y="27.800" fontSize="8.500" fontWeight="800" textLength="18" fill="#1d1d1d">PRE</text>
  </svg>
);

const TaskView = () => (
  <svg viewBox="0 0 30 30" className="size-[30px]"><rect y="10" width="21" height="18" rx="1.500" fill="#666" /><rect x="8" y="1" width="22" height="20" rx="1.500" fill="#f2f2f2" /><path d="M8 10h13v11H8z" fill="#a5a5a5" /></svg>
);

const Folder = () => (
  <svg viewBox="0 0 30 30" className="size-[30px]"><path d="M0 4q0-2 2-2h8l3 3.500h15q2 0 2 2V12H0z" fill="#dd9a0d" /><rect y="6.500" width="30" height="22" rx="1.500" fill="#fdce4b" /><path d="M5 28.500v-6q0-2 2-2h16q2 0 2 2v6z" fill="#1577cf" /><path d="M9 25h12" stroke="#0a5398" strokeWidth="1.500" /></svg>
);

const Store = () => (
  <span className="relative">
    <svg viewBox="0 0 30 30" className="size-[30px]"><path d="M8 6V3q0-2 2-2h9q2 0 2 2v3" fill="none" stroke="#2ba7ee" strokeWidth="2" /><path d="M1 5h28v21q0 3-3 3H4q-3 0-3-3z" fill="#f3f3f3" /><path d="M9.500 11.500h5v5h-5z" fill="#f25022" /><path d="M15.500 11.500h5v5h-5z" fill="#7fba00" /><path d="M9.500 17.500h5v5h-5z" fill="#00a4ef" /><path d="M15.500 17.500h5v5h-5z" fill="#ffb900" /></svg>
    <span className="absolute -top-[7px] left-4 flex size-5 items-center justify-center rounded-full bg-[#626262] text-[14px] text-[#1d1d1d]">1</span>
  </span>
);

const TikTok = () => (
  <svg viewBox="0 0 30 30" className="size-[30px]"><circle cx="15" cy="15" r="15" fill="#000" />
    <g fill="none" strokeWidth="2.800"><path d="M14.500 13q-5 0-5 4.500t4 4.200 4-4.200V7q.5 4 4.500 4.500" stroke="#25f4ee" transform="translate(-1 -.7)" /><path d="M14.500 13q-5 0-5 4.500t4 4.200 4-4.200V7q.5 4 4.500 4.500" stroke="#fe2c55" transform="translate(.8 .8)" /><path d="M14.500 13q-5 0-5 4.500t4 4.200 4-4.200V7q.5 4 4.500 4.500" stroke="#fff" /></g>
  </svg>
);

const Chrome = () => (
  <svg viewBox="0 0 30 30" className="size-[30px]">
    <path d="M2 7.500a15 15 0 0 1 26 0L15 8 8.500 18.700z" fill="#ea3f31" />
    <path d="M28 7.500A15 15 0 0 1 15 30l6.500-11.200L15 7.500z" fill="#fdc912" />
    <path d="M2 7.500A15 15 0 0 0 15 30l6.500-11.200-13 0z" fill="#2da14b" />
    <circle cx="15" cy="15" r="7.400" fill="#fff" /><circle cx="15" cy="15" r="5.900" fill="#2f7de9" />
  </svg>
);

const Word = () => (
  <svg viewBox="0 0 30 30" className="size-[30px]"><path d="M8 1h20q2 0 2 2v5H7V2z" fill="#41a5ee" /><path d="M7 8h23v7H7z" fill="#2b7cd3" /><path d="M7 15h23v7H7z" fill="#185abd" /><path d="M7 22h23v5q0 2-2 2H9q-2 0-2-2z" fill="#103f91" /><rect y="7" width="16" height="16" rx="1.500" fill="#1a55b5" /><text x="2" y="19.500" fontSize="12" fontWeight="700" textLength="12" fill="#fff">W</text></svg>
);

const Snip = () => (
  <svg viewBox="0 0 30 30" className="size-[30px]" fill="none">
    <rect width="22" height="23" rx="2" fill="#f0f1f3" />
    <path d="M4 18V4h13" stroke="#d83b01" strokeWidth="3" strokeDasharray="3.500 1.800" />
    <path d="M17 7v15M6 18h14" stroke="#999da3" strokeWidth="2.500" />
    <path d="M17 18l6-1.500M17 18v6" stroke="#9a9da1" strokeWidth="1.500" /><circle cx="26.500" cy="16" r="2.800" stroke="#2196e3" strokeWidth="2" /><circle cx="16" cy="27" r="2.500" stroke="#2196e3" strokeWidth="2" />
  </svg>
);

const apps: { key: string; icon: React.ReactNode; mark?: string; active?: boolean }[] = [
  { key: "copilot", icon: <Copilot /> },
  { key: "views", icon: <TaskView /> },
  { key: "files", icon: <Folder /> },
  { key: "store", icon: <Store /> },
  { key: "tiktok", icon: <TikTok /> },
  { key: "chrome", icon: <Chrome />, mark: "w-5 bg-[#777]", active: true },
  { key: "word", icon: <Word />, mark: "w-2 bg-[#999]" },
  { key: "snip", icon: <Snip />, mark: "w-2 bg-[#999]" },
];

function Taskbar() {
  return (
    <footer className="flex h-[60px] items-center border-t border-[#3b3f40] bg-[linear-gradient(to_right,#1f2528_0px,#282a27_250px,#2a2825_400px,#431a17_480px,#431a17_550px,#20242a_640px,#20242a_1200px,#20282a_1500px,#1c212d_1640px,#34231c_1780px,#222d25_1900px)] text-white">
      <div className="flex w-[585px] items-center pl-7">
        <Thermometer />
        <div className="mb-0.5 ml-3 text-[14.500px] leading-5">
          <div className="tracking-[-0.120px]">Current temp</div>
          <div className="tracking-[-0.200px] text-[#bdbdbd]">Ties record</div>
        </div>
      </div>
      <Windows />
      <div className="ml-[18px] flex h-[38px] w-[273px] items-center rounded-full bg-[#f2f2f2] pr-1 pl-3.5">
        <svg viewBox="0 0 20 20" className="size-5" fill="none" stroke="#1f1f1f" strokeWidth="1.900"><circle cx="8.500" cy="8" r="6.700" /><path d="M13 13l5.500 5.500" /></svg>
        <span className="mt-px ml-[11px] text-[16px] text-[#5c5c5c]">Search</span>
        <span className="ml-auto"><SearchArt /></span>
      </div>
      <div className="ml-[7px] flex gap-[4.700px]">
        {apps.map((a) => (
          <div key={a.key} className={`relative flex size-[50px] items-center justify-center rounded-md ${a.active ? "border border-[#3d4146] bg-[#32363b]" : ""}`}>
            {a.icon}
            {a.mark && <span className={`absolute bottom-0.5 h-1 rounded-full ${a.mark}`} />}
          </div>
        ))}
      </div>
      <div className="ml-auto flex items-center pr-[27px]">
        <svg viewBox="0 0 14 8" className="h-2 w-3.5" fill="none" stroke="#fff" strokeWidth="1.800"><path d="M.8 7.200L7 1l6.200 6.200" /></svg>
        <svg viewBox="0 0 20 16" className="ml-[23px] h-4 w-5" fill="none" stroke="#fff" strokeWidth="1.600"><path d="M.8 6a13 13 0 0 1 18.400 0M3.600 9a9 9 0 0 1 12.800 0M6.400 11.800a5.100 5.100 0 0 1 7.200 0" /><circle cx="10" cy="14" r="1" fill="#fff" /></svg>
        <svg viewBox="0 0 20 18" className="ml-2.5 h-[18px] w-5" fill="none" stroke="#fff" strokeWidth="1.500"><path d="M1 6.500h3L9 2v14l-5-4.500H1zM11.500 6q2 3 0 6" strokeLinejoin="round" /><path d="M14 4q3.500 5 0 10M16.500 2q5 7 0 14" stroke="#777" /></svg>
        <svg viewBox="0 0 20 14" className="ml-2.5 h-3.5 w-5" fill="none" stroke="#fff" strokeWidth="1.500"><rect x=".8" y=".8" width="15.500" height="12.400" rx="3" /><rect x="3" y="3" width="5" height="8" rx="1" fill="#fff" stroke="none" /><path d="M18 4.500v5" strokeWidth="2.500" /></svg>
        <div className="mb-0.5 ml-[19px] w-[63px] text-right text-[14.500px] leading-5 whitespace-nowrap">
          <div>1:53 PM</div>
          <div className="-tracking-[0.1px]">3/9/2024</div>
        </div>
        <svg viewBox="0 0 16 20" className="ml-[11px] h-5 w-4" fill="#7b7976"><path d="M8 0a6 6 0 0 1 6 6v6l2 4H0l2-4V6a6 6 0 0 1 6-6zM5 17h6q-1 3-3 3t-3-3z" /></svg>
      </div>
    </footer>
  );
}

export default function App() {
  return (
    <div className="flex h-[1080px] w-[1920px] flex-col overflow-hidden font-['Open_Sans',sans-serif]">
      <TabStrip />
      <Toolbar />
      <div className="flex h-[911px]">
        <Page />
        <Scrollbar />
      </div>
      <Taskbar />
    </div>
  );
}
